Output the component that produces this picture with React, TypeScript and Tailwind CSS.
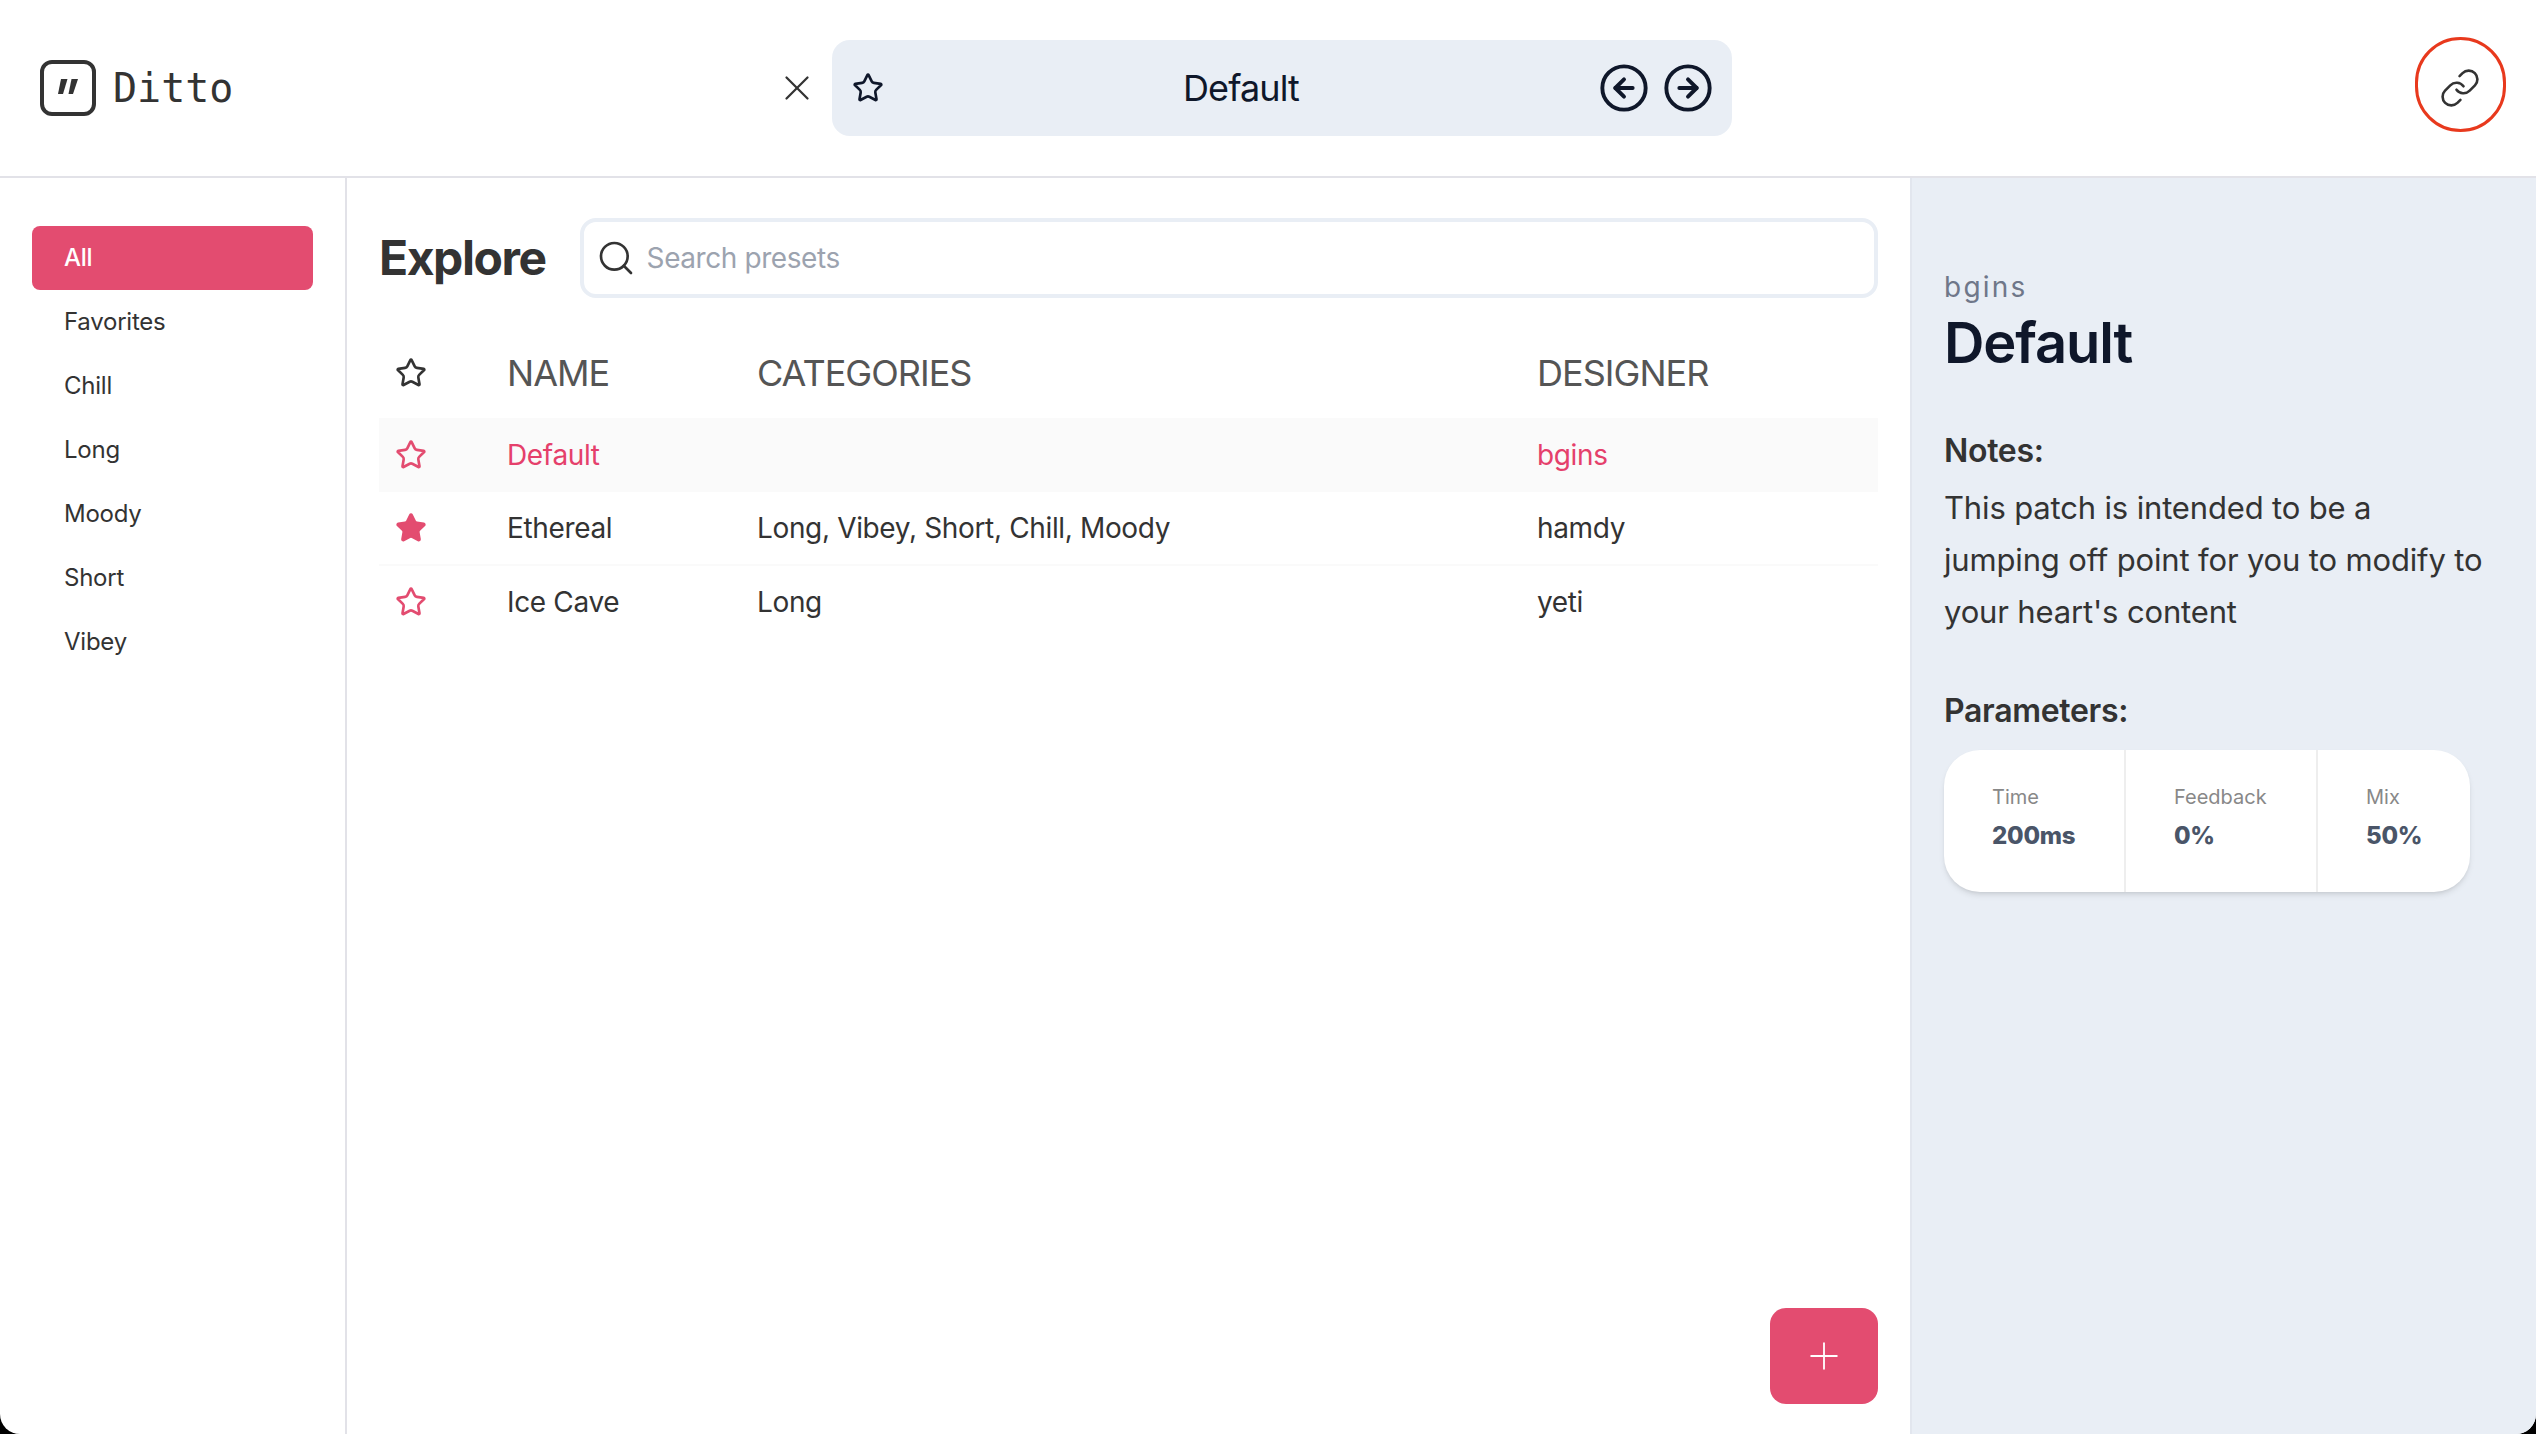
import React from "react";
import { CircleArrowLeft, CircleArrowRight, Link, Plus, Search, Star, X } from "lucide-react";

const categories = ["All", "Favorites", "Chill", "Long", "Moody", "Short", "Vibey"];

const presets = [
  { name: "Default", categories: "", designer: "bgins", favorite: false, active: true },
  { name: "Ethereal", categories: "Long, Vibey, Short, Chill, Moody", designer: "hamdy", favorite: true, active: false },
  { name: "Ice Cave", categories: "Long", designer: "yeti", favorite: false, active: false },
];

const params = [
  { label: "Time", value: "200ms", width: "w-[180px]" },
  { label: "Feedback", value: "0%", width: "w-[192px]" },
  { label: "Mix", value: "50%", width: "flex-1" },
];

const Header: React.FC = () => (
  <header className="flex h-[178px] shrink-0 items-center border-b-2 border-[#e2e2e8] bg-white pl-10 pr-[30px]">
    <div className="flex w-[720px] items-center gap-[17px]">
      <div className="flex size-[56px] items-center justify-center rounded-[12px] border-[4px] border-[#333] pb-[3px]">
        <svg width="20" height="15" viewBox="0 0 20 15" fill="#333">
          <path d="M3 0h6.500L5 15H0z" />
          <path d="M13.500 0H20L15 15h-4.500z" />
        </svg>
      </div>
      <span className="font-['DejaVu_Sans_Mono',monospace] text-[40px] leading-none text-[#333]">Ditto</span>
    </div>
    <X size={42} strokeWidth={1.3} className="mr-[14px] ml-[16px] text-[#333]" />
    <div className="flex h-[96px] w-[900px] items-center rounded-[18px] bg-[#e9eef5] pl-[20px] pr-[18px] text-[#0f172a]">
      <Star size={32} strokeWidth={2} />
      <span className="flex-1 text-center text-[36px] tracking-[-0.025em]">Default</span>
      <div className="flex items-center gap-[12px]">
        <CircleArrowLeft size={52} strokeWidth={1.8} />
        <CircleArrowRight size={52} strokeWidth={1.8} />
      </div>
    </div>
    <div className="relative ml-auto flex size-[92px] items-center justify-center">
      <Link size={42} strokeWidth={1.5} className="text-[#333]" />
      <div className="absolute top-[-5px] left-[1px] h-[95px] w-[91px] rounded-full border-[3px] border-[#e8391d]" />
    </div>
  </header>
);

const Sidebar: React.FC = () => (
  <aside className="w-[347px] shrink-0 border-r-2 border-[#e2e2e8] px-[32px] pt-[48px]">
    {categories.map((category, index) => (
      <div
        key={category}
        className={
          index === 0
            ? "flex h-[64px] items-center rounded-[8px] bg-[#e34c70] pl-[32px] text-[24px] font-medium tracking-[-0.01em] text-white"
            : "flex h-[64px] items-center pl-[32px] text-[24px] tracking-[-0.01em] text-[#333]"
        }
      >
        {category}
      </div>
    ))}
  </aside>
);

const Explore: React.FC = () => (
  <main className="relative flex flex-1 flex-col px-[32px] pt-[40px]">
    <div className="flex items-center gap-[34px]">
      <h1 className="text-[48px] font-bold tracking-[-0.03em] text-[#333]">Explore</h1>
      <div className="flex h-[80px] flex-1 items-center gap-[11px] rounded-[16px] border-[4px] border-[#e9eef5] pl-[12px]">
        <Search size={40} strokeWidth={1.6} className="text-[#333]" />
        <span className="text-[28px] tracking-[-0.015em] text-[#9ca3af]">Search presets</span>
      </div>
    </div>
    <table className="mt-[30px] w-full table-fixed border-collapse">
      <colgroup>
        <col className="w-[112px]" />
        <col className="w-[250px]" />
        <col className="w-[780px]" />
        <col />
      </colgroup>
      <thead>
        <tr className="h-[90px] text-left text-[36px] tracking-[-0.027em] text-[#555]">
          <th className="pl-[16px] font-normal">
            <Star size={32} strokeWidth={2} className="text-[#333]" />
          </th>
          <th className="pl-[16px] font-normal">NAME</th>
          <th className="pl-[16px] font-normal">CATEGORIES</th>
          <th className="pl-[16px] font-normal">DESIGNER</th>
        </tr>
      </thead>
      <tbody>
        {presets.map((preset) => (
          <tr
            key={preset.name}
            className={
              preset.active
                ? "h-[74px] bg-[#fafafa] text-[28px] tracking-[-0.0125em] text-[#e5406b]"
                : "h-[73px] border-b-2 border-[#fafafa] text-[28px] tracking-[-0.0125em] text-[#333] last:border-b-0"
            }
          >
            <td className="pl-[16px]">
              <Star
                size={32}
                strokeWidth={2}
                className="text-[#e34c70]"
                fill={preset.favorite ? "#e34c70" : "none"}
              />
            </td>
            <td className="pl-[16px]">{preset.name}</td>
            <td className="pl-[16px]">{preset.categories}</td>
            <td className="pl-[16px]">{preset.designer}</td>
          </tr>
        ))}
      </tbody>
    </table>
    <button className="absolute right-[32px] bottom-[30px] flex h-[96px] w-[108px] items-center justify-center rounded-[16px] bg-[#e34c70] text-white">
      <Plus size={44} strokeWidth={1} />
    </button>
  </main>
);

const Details: React.FC = () => (
  <aside className="w-[626px] shrink-0 border-l-2 border-[#e2e6ee] bg-[#e9eef5] pl-[32px] pt-[92px]">
    <div className="text-[28px] leading-[34px] tracking-[0.08em] text-[#6f7789]">bgins</div>
    <h2 className="mt-[3px] text-[56px] font-semibold leading-[72px] tracking-[-0.02em] text-[#0f172a]">Default</h2>
    <h3 className="mt-[50px] text-[32px] font-semibold leading-[44px] tracking-[-0.01em] text-[#333]">Notes:</h3>
    <p className="mt-[9px] w-[545px] text-[31px] leading-[52px] tracking-[-0.005em] text-[#333]">
      This patch is intended to be a jumping off point for you to modify to your heart's content
    </p>
    <h3 className="mt-[51px] text-[32px] font-semibold leading-[44px] tracking-[-0.01em] text-[#333]">Parameters:</h3>
    <div className="mt-[17px] flex h-[142px] w-[526px] rounded-[36px] bg-white shadow-md">
      {params.map((param, index) => (
        <div
          key={param.label}
          className={`flex flex-col justify-center pb-[8px] pl-[48px] ${param.width} ${index > 0 ? "border-l-2 border-[#eeeeee]" : ""}`}
        >
          <span className="text-[20px] leading-[28px] text-[#888]">{param.label}</span>
          <span className="mt-[10px] text-[24px] font-extrabold leading-[30px] tracking-[-0.01em] text-[#4a5568]">
            {param.value}
          </span>
        </div>
      ))}
    </div>
  </aside>
);

const App: React.FC = () => {
  return (
    <div className="h-screen w-full bg-black font-['Inter',sans-serif]">
      <div className="flex h-full flex-col overflow-hidden rounded-b-[20px] bg-white">
        <Header />
        <div className="flex min-h-0 flex-1">
          <Sidebar />
          <Explore />
          <Details />
        </div>
      </div>
    </div>
  );
};

export default App;
